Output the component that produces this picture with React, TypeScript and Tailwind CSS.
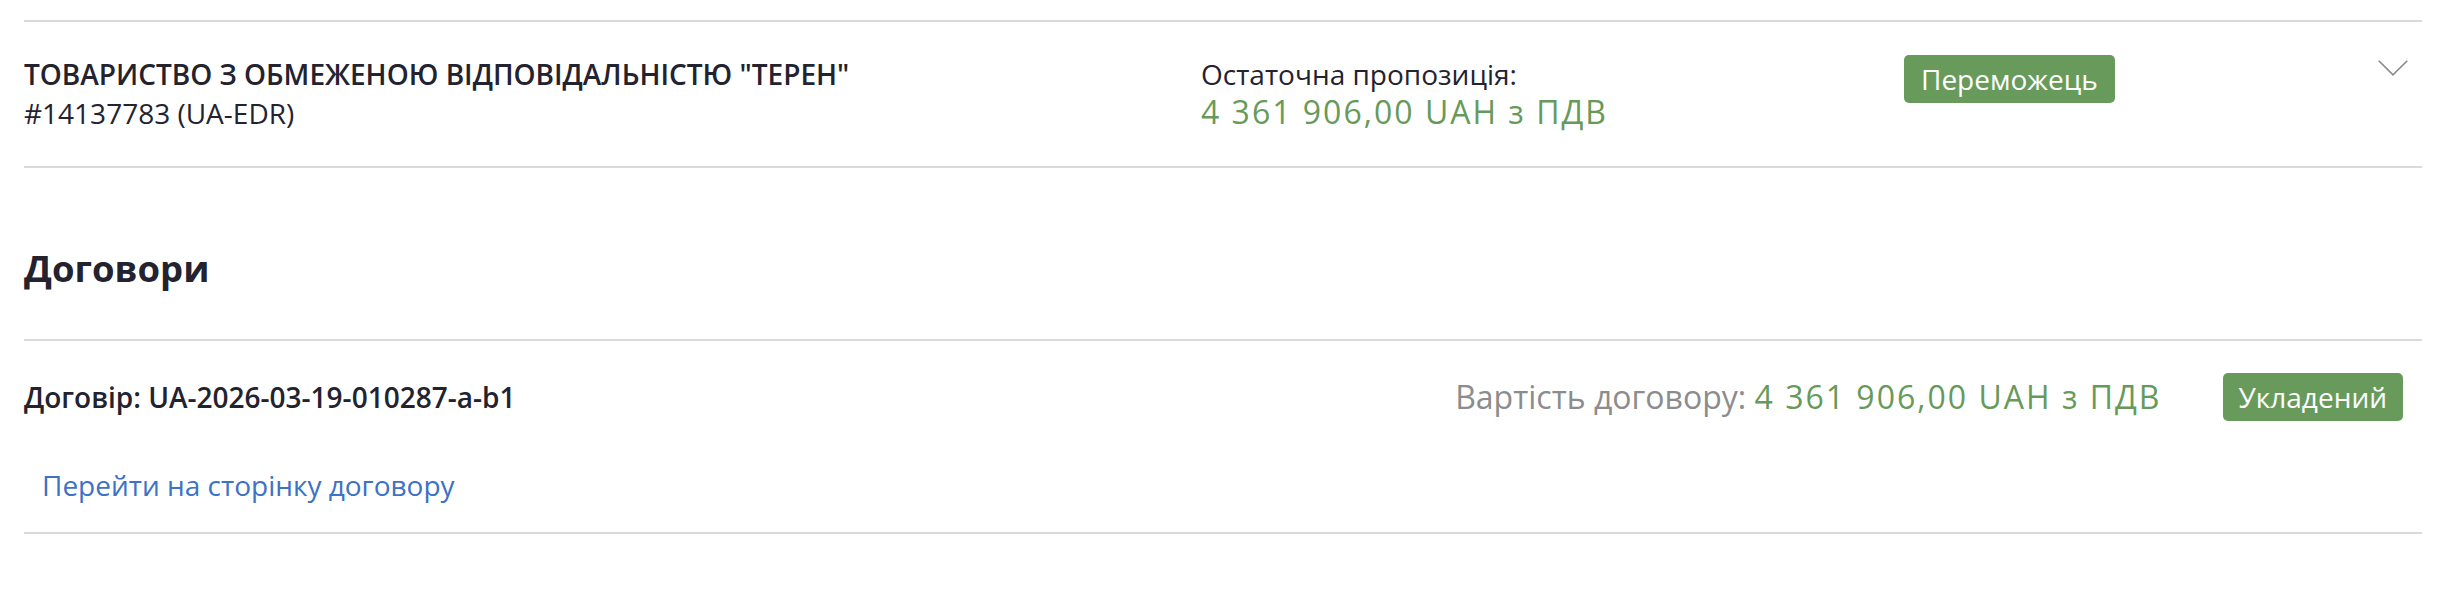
import React from "react";

export default function App() {
  return (
    <div className="w-[2446px] h-[592px] bg-white px-6 pt-5 font-['Open_Sans',sans-serif] text-[#23232f]">
      <div className="flex items-start border-t-2 border-[#dadada] pt-[33px] pb-[33px]">
        <div className="w-[1177px] text-[28px] leading-[39px]">
          <div className="font-semibold">ТОВАРИСТВО З ОБМЕЖЕНОЮ ВІДПОВІДАЛЬНІСТЮ "ТЕРЕН"</div>
          <div>#14137783 (UA-EDR)</div>
        </div>
        <div className="w-[703px]">
          <div className="text-[28px] leading-[39px]">Остаточна пропозиція:</div>
          <div className="text-[32px] leading-[36px] tracking-[2px] text-[#679a5a]">4 361 906,00 UAH з ПДВ</div>
        </div>
        <div className="h-[48px] px-[17px] rounded-[5px] bg-[#689b5b] text-white text-[28px] leading-[48px]">
          Переможець
        </div>
        <div className="flex-1 flex justify-end pr-[14px] pt-[5px]">
          <svg width="30" height="16" viewBox="0 0 30 16" fill="none">
            <polyline points="0.8,0.8 15,14.8 29.2,0.8" stroke="#8a8a8a" strokeWidth="1.6" />
          </svg>
        </div>
      </div>
      <div className="border-t-2 border-[#dadada] pt-[74px] pb-[45px]">
        <h2 className="text-[36.5px] leading-[52px] font-bold">Договори</h2>
      </div>
      <div className="border-t-2 border-b-2 border-[#dadada] pt-[32px] pb-[27px]">
        <div className="flex items-center justify-between h-[48px]">
          <div className="text-[28px] leading-[39px] font-semibold">Договір: UA-2026-03-19-010287-a-b1</div>
          <div className="flex items-center">
            <div className="text-[32px] leading-[40px] text-[#8c8c8c]">
              Вартість договору:{" "}
              <span className="tracking-[2px] text-[#679a5a]">4 361 906,00 UAH з ПДВ</span>
            </div>
            <div className="ml-[61px] mr-[19px] h-[48px] px-[16px] rounded-[5px] bg-[#689b5b] text-white text-[28px] leading-[48px]">
              Укладений
            </div>
          </div>
        </div>
        <a href="#" className="block mt-[45px] ml-[18px] w-fit text-[28px] leading-[39px] text-[#3d72c4]">
          Перейти на сторінку договору
        </a>
      </div>
    </div>
  );
}
